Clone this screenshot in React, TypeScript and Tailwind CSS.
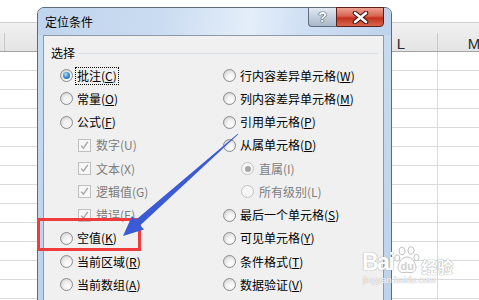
import React from 'react'

type Opt = {
  label: string
  hotkey: string
  sub?: boolean
  check?: boolean
  checked?: boolean
  disabled?: boolean
  focus?: boolean
}

const leftOpts: Opt[] = [
  { label: '批注', hotkey: 'C', checked: true, focus: true },
  { label: '常量', hotkey: 'O' },
  { label: '公式', hotkey: 'F' },
  { label: '数字', hotkey: 'U', sub: true, check: true, checked: true, disabled: true },
  { label: '文本', hotkey: 'X', sub: true, check: true, checked: true, disabled: true },
  { label: '逻辑值', hotkey: 'G', sub: true, check: true, checked: true, disabled: true },
  { label: '错误', hotkey: 'E', sub: true, check: true, checked: true, disabled: true },
  { label: '空值', hotkey: 'K' },
  { label: '当前区域', hotkey: 'R' },
  { label: '当前数组', hotkey: 'A' },
]

const rightOpts: Opt[] = [
  { label: '行内容差异单元格', hotkey: 'W' },
  { label: '列内容差异单元格', hotkey: 'M' },
  { label: '引用单元格', hotkey: 'P' },
  { label: '从属单元格', hotkey: 'D' },
  { label: '直属', hotkey: 'I', sub: true, checked: true, disabled: true },
  { label: '所有级别', hotkey: 'L', sub: true, disabled: true },
  { label: '最后一个单元格', hotkey: 'S' },
  { label: '可见单元格', hotkey: 'Y' },
  { label: '条件格式', hotkey: 'T' },
  { label: '数据验证', hotkey: 'V' },
]

const Radio = ({ checked, disabled }: { checked?: boolean; disabled?: boolean }) => {
  if (disabled) {
    return (
      <span className="flex h-[13px] w-[13px] shrink-0 items-center justify-center rounded-full border border-[#c2c2c2] bg-[#f6f6f6]">
        {checked && <span className="h-[6px] w-[6px] rounded-full bg-[#a6a6a6]" />}
      </span>
    )
  }
  return (
    <span className="flex h-[13px] w-[13px] shrink-0 items-center justify-center rounded-full border border-[#8c8c8c] bg-[radial-gradient(circle_at_62%_68%,#ffffff_0%,#f1f1f1_40%,#c6c6c6_100%)]">
      {checked && (
        <span className="h-[7px] w-[7px] rounded-full bg-[radial-gradient(circle_at_40%_35%,#b5e2ff_0%,#3f8fd6_45%,#17518f_100%)]" />
      )}
    </span>
  )
}

const CheckBox = () => (
  <span className="flex h-[13px] w-[13px] shrink-0 items-center justify-center border border-[#bfbfbf] bg-[#f7f7f7]">
    <svg width="9" height="9" viewBox="0 0 9 9">
      <path d="M1.2 4.6 L3.4 7.2 L7.8 0.8" fill="none" stroke="#a5a5a5" strokeWidth="1.4" />
    </svg>
  </span>
)

const OptionRow = ({ opt }: { opt: Opt }) => {
  const text = (
    <span className={opt.disabled ? 'text-[#7d7d7d]' : 'text-black'}>
      {opt.label}(
      {opt.disabled ? opt.hotkey : <u className="underline-offset-[1px]">{opt.hotkey}</u>})
    </span>
  )
  return (
    <div className={opt.sub ? 'flex h-[23.25px] items-center gap-[5px] pl-[18px]' : 'flex h-[23.25px] items-center gap-[4px]'}>
      {opt.check ? <CheckBox /> : <Radio checked={opt.checked} disabled={opt.disabled} />}
      {opt.focus ? (
        <span className="-ml-[2px] border border-dotted border-black px-[1px] py-[1px]">{text}</span>
      ) : (
        text
      )}
    </div>
  )
}

const Dialog = () => (
  <div className="absolute left-[37px] top-[7px] flex h-[310px] w-[355px] flex-col rounded-t-[7px] border border-[#5c6b7d] bg-[linear-gradient(180deg,#c9dcf1_0%,#bcd3ec_100%)] font-['Noto_Sans_CJK_SC',sans-serif] text-[12px] leading-[14px]">
    <div className="flex h-[27px] items-start justify-between rounded-t-[6px] bg-[linear-gradient(100deg,#bfd4ed_0%,#cadcf1_35%,#e4eefa_60%,#cfe0f3_75%,#bed3ec_100%)] pl-[7px] pr-[7px]">
      <div className="flex h-[27px] items-center text-black">定位条件</div>
      <div className="-mt-[1px] flex h-[20px]">
        <div className="flex w-[28px] items-center justify-center rounded-bl-[4px] border border-r-0 border-[#5e6d80] bg-[linear-gradient(180deg,#e3eaf2_0%,#c3cfdd_50%,#a9b8ca_100%)]">
          <span className="font-['Liberation_Sans',sans-serif] text-[14px] font-bold leading-none text-white [text-shadow:0_0_1px_#33445a,0_0_1px_#33445a,0_0_1px_#33445a]">?</span>
        </div>
        <div className="flex w-[48px] items-center justify-center rounded-br-[4px] border border-[#5a1f17] bg-[linear-gradient(180deg,#eba293_0%,#d9634f_45%,#c2311f_55%,#d9664f_100%)]">
          <svg width="17" height="13" viewBox="0 0 17 13">
            <path d="M3 2 L14 11 M14 2 L3 11" stroke="#3b1410" strokeWidth="4.6" strokeLinecap="round" />
            <path d="M3 2 L14 11 M14 2 L3 11" stroke="#ffffff" strokeWidth="2.6" strokeLinecap="round" />
          </svg>
        </div>
      </div>
    </div>
    <div className="ml-[5px] mr-[7px] flex-1 border border-b-0 border-[#8e9aa8] bg-[#f0f0f0]">
      <div className="mt-[10px] flex h-[14px] items-center pl-[7px] pr-[5px]">
        <span className="text-black">选择</span>
        <div className="ml-[3px] h-px flex-1 bg-[#d5dfe5]" />
      </div>
      <div className="mt-[4px] flex pl-[16px]">
        <div className="flex w-[163px] shrink-0 flex-col">
          {leftOpts.map((o) => (
            <OptionRow key={o.hotkey} opt={o} />
          ))}
        </div>
        <div className="flex flex-1 flex-col">
          {rightOpts.map((o) => (
            <OptionRow key={o.hotkey} opt={o} />
          ))}
        </div>
      </div>
    </div>
  </div>
)

const Sheet = () => (
  <div className="flex flex-col">
    <div className="h-[22px]" />
    <div className="flex h-[30px] flex-col border-y border-t-[#cfcfcf] border-b-[#a3a3a3] bg-[linear-gradient(180deg,#f1f1f1_0%,#e4e4e4_100%)]">
      <div className="h-[10px]" />
      <div className="flex flex-1 font-['Liberation_Sans',sans-serif] text-[15px] leading-none text-[#2b2b2b]">
        <div className="w-[5px] shrink-0 border-r border-[#c9c9c9]" />
        <div className="w-[360px] shrink-0" />
        <div className="flex w-[73px] shrink-0 items-center justify-center border-r border-[#c9c9c9] pt-[2px]">L</div>
        <div className="flex w-[72px] shrink-0 items-center justify-center pt-[2px]">M</div>
      </div>
    </div>
    {Array.from({ length: 13 }).map((_, i) => (
      <div key={i} className="flex h-[19px] border-b border-[#dadada]">
        <div className="w-[438px] shrink-0 border-r border-[#dadada]" />
        <div className="flex-1" />
      </div>
    ))}
  </div>
)

const Watermark = () => (
  <div className="pointer-events-none absolute left-[362px] top-[246px] flex flex-col">
    <div className="flex items-end">
      <span className="font-['Liberation_Sans',sans-serif] text-[23px] font-bold leading-none tracking-[-1.5px] text-white [text-shadow:0_0_1px_#b4b4b4,0_0_1px_#b4b4b4,0_0_1px_#b4b4b4]">
        Bai
      </span>
      <span className="relative ml-[1px] flex h-[28px] w-[26px] items-end justify-center">
        <svg className="absolute left-0 top-0" width="26" height="28" viewBox="0 0 26 28">
          <g fill="#ffffff" stroke="#c2c2c2" strokeWidth="1">
            <ellipse cx="8" cy="5" rx="3" ry="3.8" />
            <ellipse cx="17" cy="4.5" rx="3" ry="3.8" />
            <ellipse cx="3.2" cy="12" rx="2.6" ry="3.2" />
            <ellipse cx="22.5" cy="11.5" rx="2.6" ry="3.2" />
            <path d="M13 11 C8 11 4.5 17 4 21 C3.6 25 7 27 10 26.5 C12 26.2 14 26.2 16 26.5 C19 27 22.4 25 22 21 C21.5 17 18 11 13 11 Z" />
          </g>
        </svg>
        <span className="relative mb-[2px] font-['Liberation_Sans',sans-serif] text-[11px] font-bold leading-none text-[#d0d0d0]">du</span>
      </span>
      <span className="ml-[1px] font-['Noto_Sans_CJK_SC',sans-serif] text-[16px] font-bold leading-none text-white [text-shadow:0_0_1px_#b4b4b4,0_0_1px_#b4b4b4,0_0_1px_#b4b4b4]">
        经验
      </span>
    </div>
    <span className="mt-[2px] pl-[1px] font-['Liberation_Sans',sans-serif] text-[9px] leading-none text-white [text-shadow:0_0_1px_#b4b4b4,0_0_1px_#b4b4b4]">
      jingyan.baidu.com
    </span>
  </div>
)

export default function App() {
  return (
    <div className="relative h-[300px] w-[479px] overflow-hidden bg-white">
      <Sheet />
      <Dialog />
      <div className="pointer-events-none absolute left-[37px] top-[218px] h-[33px] w-[104px] border-[3px] border-[#ef3b3b]" />
      <svg className="pointer-events-none absolute left-0 top-0" width="479" height="300" viewBox="0 0 479 300">
        <polygon
          points="238.3,134.3 140.3,225.3 144,229.4 123,236 132,216 135.7,220.1 237.7,133.7"
          fill="#3b5bd6"
        />
      </svg>
      <Watermark />
    </div>
  )
}
